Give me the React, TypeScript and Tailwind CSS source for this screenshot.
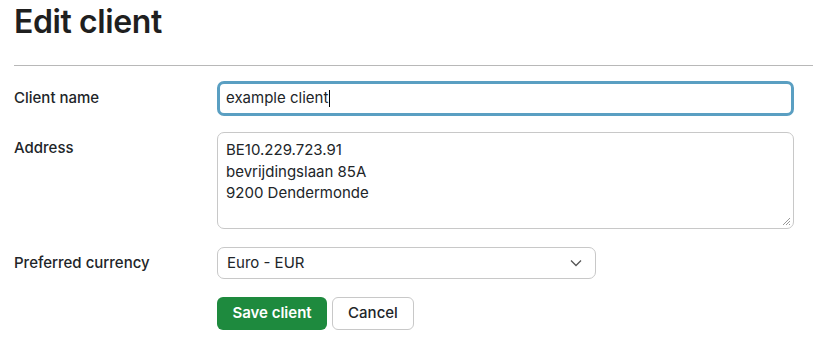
import React from "react";

export default function App() {
  return (
    <div className="min-h-[347px] bg-white pl-[14px] pr-[1px] text-[#212529]" style={{ fontFamily: "Inter, 'Noto Sans', sans-serif" }}>
      <h1 className="pt-[2px] text-[32px] font-semibold leading-[40px] tracking-[-0.4px] text-[#1f1f1f]">Edit client</h1>
      <div className="mt-[23px] h-px bg-[#b8b8b8]" />
      <div className="mr-[19px] mt-[15px] grid grid-cols-[203px_1fr] items-start">
        <label className="pt-[7px] text-[15px] font-medium leading-[20px]">Client name</label>
        <div className="flex h-[35px] items-center rounded-[7px] border-[3px] border-[#5a9fc2] px-[6px] text-[15px]">
          example client<span className="ml-px inline-block h-[17px] w-px bg-black" />
        </div>
        <label className="mt-[16px] pt-[6px] text-[15px] font-medium leading-[20px]">Address</label>
        <div className="relative mt-[16px] h-[97px] rounded-[7px] border border-[#c8c8c8] px-[8px] pt-[6px] text-[15px] leading-[21.5px] proportional-nums">
          <div>BE10.229.723.91</div>
          <div>bevrijdingslaan 85A</div>
          <div>9200 Dendermonde</div>
          <svg className="absolute bottom-[2px] right-[2px]" width="9" height="9" viewBox="0 0 9 9">
            <path d="M8 1 L1 8 M8 4 L4 8 M8 7 L7 8" stroke="#999" strokeWidth="1" />
          </svg>
        </div>
        <label className="mt-[18px] pt-[6px] text-[15px] font-medium leading-[20px]">Preferred currency</label>
        <div className="mt-[18px] flex h-[32px] w-[379px] items-center justify-between rounded-[7px] border border-[#c8c8c8] pl-[9px] pr-[13px] text-[15px]">
          <span>Euro - EUR</span>
          <svg width="12" height="8" viewBox="0 0 12 8">
            <path d="M1 1.5 L6 6.5 L11 1.5" fill="none" stroke="#555" strokeWidth="1.3" />
          </svg>
        </div>
        <div />
        <div className="mt-[18px] flex gap-[5px]">
          <button className="h-[33px] w-[110px] rounded-[6px] bg-[#1e8a3e] text-[15px] font-semibold text-white">Save client</button>
          <button className="h-[33px] w-[82px] rounded-[6px] border border-[#c8c8c8] bg-white text-[15px] font-medium text-[#212529]">Cancel</button>
        </div>
      </div>
    </div>
  );
}
